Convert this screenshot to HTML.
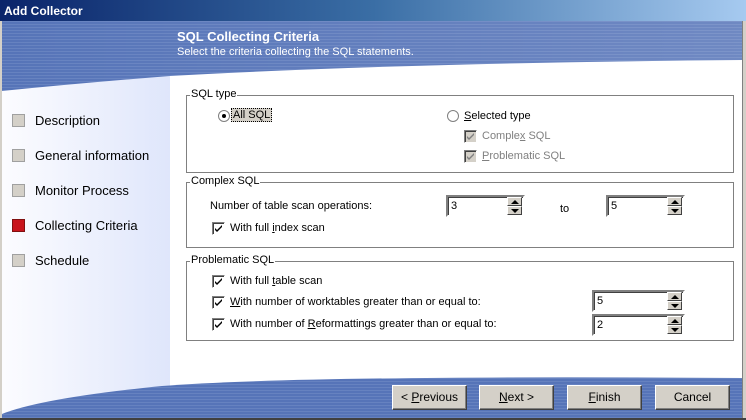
<!DOCTYPE html>
<html><head><style>
*{margin:0;padding:0;box-sizing:border-box}
body{width:746px;height:420px;overflow:hidden;background:#d4d0c8;font-family:"Liberation Sans",sans-serif;font-size:11px;color:#000;position:relative}
.abs{position:absolute}
.title{left:0;top:0;width:746px;height:21px;background:linear-gradient(90deg,#0a246a,#3a6ea5 50%,#a6caf0);color:#fff;font-weight:bold;font-size:12px;padding:4px 0 0 4px}
.main{left:2px;top:21px;width:740px;height:397px;background:#fff;overflow:hidden}
.grp{position:absolute;border:1px solid #808080;box-shadow:1px 1px 0 #fff inset}
.grp .lg{position:absolute;top:-8px;left:3px;background:#fff;padding:0 1px;font-size:11px}
.cb{position:absolute;width:13px;height:13px;border:1px solid;border-color:#808080 #fff #fff #808080;background:#fff;box-shadow:inset 1px 1px 0 #404040}
.cb svg{position:absolute;left:1px;top:1px}
.cb.dis{background:#d4d0c8}
.t{position:absolute;white-space:nowrap}
.spin{position:absolute;height:22px;border:2px solid;border-color:#808080 #fff #fff #808080;background:#fff;box-shadow:inset 1px 1px 0 #404040}
.spin span{position:absolute;left:3px;top:3px}
.spin .b{position:absolute;right:1px;width:15px;height:9px;background:#d4d0c8;border:1px solid;border-color:#fff #404040 #404040 #fff}
.b.u::after{content:"";position:absolute;left:3px;top:2px;border-left:4px solid transparent;border-right:4px solid transparent;border-bottom:4px solid #000}
.b.d::after{content:"";position:absolute;left:3px;top:2px;border-left:4px solid transparent;border-right:4px solid transparent;border-top:4px solid #000}
.btn{position:absolute;top:385px;width:75px;height:25px;background:#d4d0c8;border:1px solid;border-color:#fff #404040 #404040 #fff;box-shadow:inset -1px -1px 0 #808080;text-align:center;line-height:23px;font-size:12px}
.nav{position:absolute;left:12px;width:13px;height:13px;background:#d4d0c8;border:1px solid #a0a0a0}
.navt{position:absolute;left:35px;font-size:13px;color:#000}
u{text-decoration:underline}
</style></head><body>
<div class="abs title">Add Collector</div>
<div class="abs main">
<svg class="abs" style="left:0;top:0" width="740" height="397">
<defs>
<linearGradient id="lp" x1="0" x2="1"><stop offset="0" stop-color="#fcfcff"/><stop offset="1" stop-color="#dfe6fb"/></linearGradient>
<pattern id="st" width="4" height="3" patternUnits="userSpaceOnUse"><rect width="4" height="3" fill="#5674b8"/><rect width="4" height="1" fill="#6682c0"/></pattern>
<linearGradient id="hb" x1="0" x2="1"><stop offset="0" stop-color="#fff" stop-opacity="0"/><stop offset="1" stop-color="#fff" stop-opacity="0.15"/></linearGradient>
</defs>
<rect x="0" y="0" width="168" height="397" fill="url(#lp)"/>
<path d="M0 0H740V39Q400 42 168 55Q80 62 0 70Z" fill="url(#st)"/>
<path d="M0 0H740V39Q400 42 168 55Q80 62 0 70Z" fill="url(#hb)"/>
<path d="M0 397H740V357Q300 354 160 365Q40 377 0 393Z" fill="url(#st)"/>
</svg>
<div class="t" style="left:175px;top:8px;color:#fff;font-weight:bold;font-size:13px">SQL Collecting Criteria</div>
<div class="t" style="left:175px;top:25px;color:#fff;font-size:11px">Select the criteria collecting the SQL statements.</div>
</div>
<div class="abs" style="left:742px;top:21px;width:4px;height:399px;background:#d4d0c8;border-left:1px solid #808080"></div>
<div class="abs" style="left:0;top:418px;width:746px;height:2px;background:#404040"></div>
<div class="abs" style="left:0;top:21px;width:2px;height:397px;background:#d4d0c8"></div>

<div class="nav" style="top:114px"></div><div class="navt" style="top:113px">Description</div>
<div class="nav" style="top:149px"></div><div class="navt" style="top:148px">General information</div>
<div class="nav" style="top:184px"></div><div class="navt" style="top:183px">Monitor Process</div>
<div class="nav" style="top:219px;background:#c8141c;border-color:#801010"></div><div class="navt" style="top:218px">Collecting Criteria</div>
<div class="nav" style="top:254px"></div><div class="navt" style="top:253px">Schedule</div>

<div class="grp" style="left:186px;top:95px;width:548px;height:78px"><div class="lg">SQL type</div></div>
<svg class="abs" style="left:218px;top:110px" width="12" height="12"><circle cx="6" cy="6" r="5.5" fill="#fff" stroke="#808080"/><circle cx="6" cy="6" r="2" fill="#000"/></svg>
<div class="t" style="left:231px;top:108px;background:#d4d0c8;border:1px dotted #000;padding:0 1px">All SQL</div>
<svg class="abs" style="left:447px;top:110px" width="12" height="12"><circle cx="6" cy="6" r="5.5" fill="#fff" stroke="#808080"/></svg>
<div class="t" style="left:464px;top:110px"><u>S</u>elected type</div>
<div class="cb dis" style="left:464px;top:130px"><svg width="9" height="9"><path d="M1 4l2 2 5-5v2l-5 5-2-2z" fill="#808080"/></svg></div>
<div class="t" style="left:482px;top:130px;color:#808080">Comple<u>x</u> SQL</div>
<div class="cb dis" style="left:464px;top:150px"><svg width="9" height="9"><path d="M1 4l2 2 5-5v2l-5 5-2-2z" fill="#808080"/></svg></div>
<div class="t" style="left:482px;top:150px;color:#808080"><u>P</u>roblematic SQL</div>

<div class="grp" style="left:186px;top:182px;width:548px;height:66px"><div class="lg">Complex SQL</div></div>
<div class="t" style="left:210px;top:200px">Number of table scan operations:</div>
<div class="spin" style="left:446px;top:195px;width:79px"><span>3</span><div class="b u" style="top:0"></div><div class="b d" style="top:9px"></div></div>
<div class="t" style="left:560px;top:203px">to</div>
<div class="spin" style="left:606px;top:195px;width:79px"><span>5</span><div class="b u" style="top:0"></div><div class="b d" style="top:9px"></div></div>
<div class="cb" style="left:212px;top:222px"><svg width="9" height="9"><path d="M1 4l2 2 5-5v2l-5 5-2-2z" fill="#000"/></svg></div>
<div class="t" style="left:230px;top:222px">With full <u>i</u>ndex scan</div>

<div class="grp" style="left:186px;top:261px;width:548px;height:80px"><div class="lg">Problematic SQL</div></div>
<div class="cb" style="left:212px;top:275px"><svg width="9" height="9"><path d="M1 4l2 2 5-5v2l-5 5-2-2z" fill="#000"/></svg></div>
<div class="t" style="left:230px;top:275px">With full <u>t</u>able scan</div>
<div class="cb" style="left:212px;top:296px"><svg width="9" height="9"><path d="M1 4l2 2 5-5v2l-5 5-2-2z" fill="#000"/></svg></div>
<div class="t" style="left:230px;top:296px"><u>W</u>ith number of worktables greater than or equal to:</div>
<div class="spin" style="left:592px;top:290px;width:93px"><span>5</span><div class="b u" style="top:0"></div><div class="b d" style="top:9px"></div></div>
<div class="cb" style="left:212px;top:318px"><svg width="9" height="9"><path d="M1 4l2 2 5-5v2l-5 5-2-2z" fill="#000"/></svg></div>
<div class="t" style="left:230px;top:318px">With number of <u>R</u>eformattings greater than or equal to:</div>
<div class="spin" style="left:592px;top:314px;width:93px"><span>2</span><div class="b u" style="top:0"></div><div class="b d" style="top:9px"></div></div>

<div class="btn" style="left:392px">&lt; <u>P</u>revious</div>
<div class="btn" style="left:479px"><u>N</u>ext &gt;</div>
<div class="btn" style="left:567px"><u>F</u>inish</div>
<div class="btn" style="left:655px">Cancel</div>
</body></html>
